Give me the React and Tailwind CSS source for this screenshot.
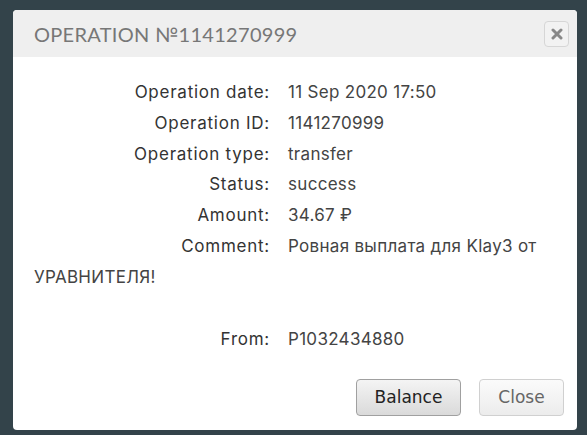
import React from "react";

const rows = [
  ["Operation date:", "11 Sep 2020 17:50"],
  ["Operation ID:", "1141270999"],
  ["Operation type:", "transfer"],
  ["Status:", "success"],
  ["Amount:", "34.67 ₽"],
  ["Comment:", "Ровная выплата для Klay3 от УРАВНИТЕЛЯ!"],
];

function Row({ label, value }) {
  return (
    <div>
      <span className="inline-block w-[236px] text-right mr-[18px] text-[#333] tracking-[0.75px]">{label}</span>
      <span className="text-[#444] tracking-[0.3px]">{value}</span>
    </div>
  );
}

export default function App() {
  return (
    <div className="w-[587px] h-[435px] bg-[#33434a] pt-[10px] pl-[13px] overflow-hidden">
      <div className="w-[564px] h-[420px] bg-white rounded-[4px] flex flex-col overflow-hidden">
        <div className="h-[47px] bg-[#efefef] flex items-center justify-between pl-[21px] pr-[8px]">
          <div
            className="text-[20px] tracking-[0.3px] text-[#777] uppercase"
            style={{ fontFamily: '"Lato", sans-serif' }}
          >
            Operation №1141270999
          </div>
          <button className="w-[25px] h-[26px] border border-[#d6d6d6] rounded-[4px] bg-[#f2f2f2] flex items-center justify-center">
            <svg width="12" height="12" viewBox="0 0 12 12">
              <path d="M2 2 L10 10 M10 2 L2 10" stroke="#888" strokeWidth="3" strokeLinecap="round" />
            </svg>
          </button>
        </div>
        <div
          className="px-[21px] pt-[20px] text-[17px] leading-[30.8px]"
          style={{ fontFamily: '"Inter", sans-serif' }}
        >
          {rows.map(([l, v]) => (
            <Row key={l} label={l} value={v} />
          ))}
          <div className="h-[31px]" />
          <Row label="From:" value="P1032434880" />
        </div>
        <div
          className="mt-auto flex justify-end gap-[18px] pr-[13px] pb-[14px]"
          style={{ fontFamily: '"DejaVu Sans", sans-serif' }}
        >
          <button className="w-[105px] h-[37px] rounded-[4px] border border-[#a0a0a0] bg-gradient-to-b from-[#f4f4f4] to-[#dadada] text-[17px] text-[#222]">
            Balance
          </button>
          <button className="w-[85px] h-[37px] rounded-[4px] border border-[#d0d0d0] bg-gradient-to-b from-[#fbfbfb] to-[#ececec] text-[17px] text-[#666]">
            Close
          </button>
        </div>
      </div>
    </div>
  );
}
